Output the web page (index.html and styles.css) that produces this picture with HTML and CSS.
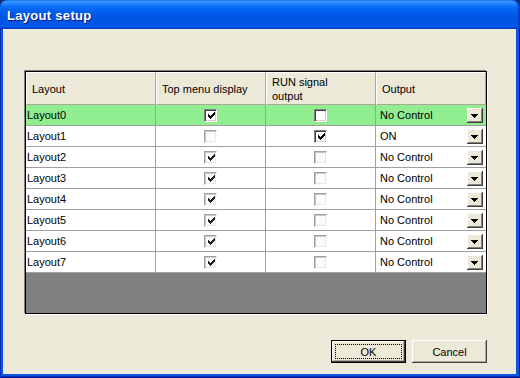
FILE: index.html
```html
<!DOCTYPE html>
<html>
<head>
<meta charset="utf-8">
<link rel="stylesheet" href="styles.css">
</head>
<body>
<div class="window">
  <div class="titlebar"><span class="title">Layout setup</span></div>
  <div class="client">
    <div class="grid">
      <div class="row header">
        <div class="cell">Layout</div>
        <div class="cell">Top menu display</div>
        <div class="cell">RUN signal<br>output</div>
        <div class="cell">Output</div>
      </div>

      <div class="row selected">
        <div class="cell c-name">Layout0</div>
        <div class="cell c-chk"><span class="chk"><svg width="7" height="7" class="tick"><rect x="0" y="2" width="1" height="3"/><rect x="1" y="3" width="1" height="3"/><rect x="2" y="4" width="1" height="3"/><rect x="3" y="3" width="1" height="3"/><rect x="4" y="2" width="1" height="3"/><rect x="5" y="1" width="1" height="3"/><rect x="6" y="0" width="1" height="3"/></svg></span></div>
        <div class="cell c-chk"><span class="chk"></span></div>
        <div class="cell c-out"><span>No Control</span><span class="dd"><svg width="7" height="4"><rect x="0" y="0" width="7" height="1"/><rect x="1" y="1" width="5" height="1"/><rect x="2" y="2" width="3" height="1"/><rect x="3" y="3" width="1" height="1"/></svg></span></div>
      </div>

      <div class="row">
        <div class="cell c-name">Layout1</div>
        <div class="cell c-chk"><span class="chk off"></span></div>
        <div class="cell c-chk"><span class="chk"><svg width="7" height="7" class="tick"><rect x="0" y="2" width="1" height="3"/><rect x="1" y="3" width="1" height="3"/><rect x="2" y="4" width="1" height="3"/><rect x="3" y="3" width="1" height="3"/><rect x="4" y="2" width="1" height="3"/><rect x="5" y="1" width="1" height="3"/><rect x="6" y="0" width="1" height="3"/></svg></span></div>
        <div class="cell c-out"><span>ON</span><span class="dd"><svg width="7" height="4"><rect x="0" y="0" width="7" height="1"/><rect x="1" y="1" width="5" height="1"/><rect x="2" y="2" width="3" height="1"/><rect x="3" y="3" width="1" height="1"/></svg></span></div>
      </div>

      <div class="row">
        <div class="cell c-name">Layout2</div>
        <div class="cell c-chk"><span class="chk off"><svg width="7" height="7" class="tick"><rect x="0" y="2" width="1" height="3"/><rect x="1" y="3" width="1" height="3"/><rect x="2" y="4" width="1" height="3"/><rect x="3" y="3" width="1" height="3"/><rect x="4" y="2" width="1" height="3"/><rect x="5" y="1" width="1" height="3"/><rect x="6" y="0" width="1" height="3"/></svg></span></div>
        <div class="cell c-chk"><span class="chk off"></span></div>
        <div class="cell c-out"><span>No Control</span><span class="dd"><svg width="7" height="4"><rect x="0" y="0" width="7" height="1"/><rect x="1" y="1" width="5" height="1"/><rect x="2" y="2" width="3" height="1"/><rect x="3" y="3" width="1" height="1"/></svg></span></div>
      </div>

      <div class="row">
        <div class="cell c-name">Layout3</div>
        <div class="cell c-chk"><span class="chk off"><svg width="7" height="7" class="tick"><rect x="0" y="2" width="1" height="3"/><rect x="1" y="3" width="1" height="3"/><rect x="2" y="4" width="1" height="3"/><rect x="3" y="3" width="1" height="3"/><rect x="4" y="2" width="1" height="3"/><rect x="5" y="1" width="1" height="3"/><rect x="6" y="0" width="1" height="3"/></svg></span></div>
        <div class="cell c-chk"><span class="chk off"></span></div>
        <div class="cell c-out"><span>No Control</span><span class="dd"><svg width="7" height="4"><rect x="0" y="0" width="7" height="1"/><rect x="1" y="1" width="5" height="1"/><rect x="2" y="2" width="3" height="1"/><rect x="3" y="3" width="1" height="1"/></svg></span></div>
      </div>

      <div class="row">
        <div class="cell c-name">Layout4</div>
        <div class="cell c-chk"><span class="chk off"><svg width="7" height="7" class="tick"><rect x="0" y="2" width="1" height="3"/><rect x="1" y="3" width="1" height="3"/><rect x="2" y="4" width="1" height="3"/><rect x="3" y="3" width="1" height="3"/><rect x="4" y="2" width="1" height="3"/><rect x="5" y="1" width="1" height="3"/><rect x="6" y="0" width="1" height="3"/></svg></span></div>
        <div class="cell c-chk"><span class="chk off"></span></div>
        <div class="cell c-out"><span>No Control</span><span class="dd"><svg width="7" height="4"><rect x="0" y="0" width="7" height="1"/><rect x="1" y="1" width="5" height="1"/><rect x="2" y="2" width="3" height="1"/><rect x="3" y="3" width="1" height="1"/></svg></span></div>
      </div>

      <div class="row">
        <div class="cell c-name">Layout5</div>
        <div class="cell c-chk"><span class="chk off"><svg width="7" height="7" class="tick"><rect x="0" y="2" width="1" height="3"/><rect x="1" y="3" width="1" height="3"/><rect x="2" y="4" width="1" height="3"/><rect x="3" y="3" width="1" height="3"/><rect x="4" y="2" width="1" height="3"/><rect x="5" y="1" width="1" height="3"/><rect x="6" y="0" width="1" height="3"/></svg></span></div>
        <div class="cell c-chk"><span class="chk off"></span></div>
        <div class="cell c-out"><span>No Control</span><span class="dd"><svg width="7" height="4"><rect x="0" y="0" width="7" height="1"/><rect x="1" y="1" width="5" height="1"/><rect x="2" y="2" width="3" height="1"/><rect x="3" y="3" width="1" height="1"/></svg></span></div>
      </div>

      <div class="row">
        <div class="cell c-name">Layout6</div>
        <div class="cell c-chk"><span class="chk off"><svg width="7" height="7" class="tick"><rect x="0" y="2" width="1" height="3"/><rect x="1" y="3" width="1" height="3"/><rect x="2" y="4" width="1" height="3"/><rect x="3" y="3" width="1" height="3"/><rect x="4" y="2" width="1" height="3"/><rect x="5" y="1" width="1" height="3"/><rect x="6" y="0" width="1" height="3"/></svg></span></div>
        <div class="cell c-chk"><span class="chk off"></span></div>
        <div class="cell c-out"><span>No Control</span><span class="dd"><svg width="7" height="4"><rect x="0" y="0" width="7" height="1"/><rect x="1" y="1" width="5" height="1"/><rect x="2" y="2" width="3" height="1"/><rect x="3" y="3" width="1" height="1"/></svg></span></div>
      </div>

      <div class="row">
        <div class="cell c-name">Layout7</div>
        <div class="cell c-chk"><span class="chk off"><svg width="7" height="7" class="tick"><rect x="0" y="2" width="1" height="3"/><rect x="1" y="3" width="1" height="3"/><rect x="2" y="4" width="1" height="3"/><rect x="3" y="3" width="1" height="3"/><rect x="4" y="2" width="1" height="3"/><rect x="5" y="1" width="1" height="3"/><rect x="6" y="0" width="1" height="3"/></svg></span></div>
        <div class="cell c-chk"><span class="chk off"></span></div>
        <div class="cell c-out"><span>No Control</span><span class="dd"><svg width="7" height="4"><rect x="0" y="0" width="7" height="1"/><rect x="1" y="1" width="5" height="1"/><rect x="2" y="2" width="3" height="1"/><rect x="3" y="3" width="1" height="1"/></svg></span></div>
      </div>

      <div class="empty"></div>
    </div>

    <div class="buttons">
      <button class="btn default">OK</button>
      <button class="btn">Cancel</button>
    </div>
  </div>
</div>
</body>
</html>
```

FILE: styles.css
```css
html, body {
  margin: 0;
  padding: 0;
}
body {
  background: #1c2c6c;
  font-family: "Liberation Sans", Arial, sans-serif;
  font-size: 11px;
  color: #000;
}
.window {
  width: 520px;
  height: 378px;
  display: flex;
  flex-direction: column;
  background: #0a55e0;
  border-radius: 7px 7px 0 0;
  overflow: hidden;
  box-shadow: inset 1px 0 #0027b8, inset -1px 0 #001a94, inset 0 -1px #00138c, inset 0 -2px #0030c4;
}
.titlebar {
  flex: none;
  height: 29px;
  box-sizing: border-box;
  padding: 1px 0 0 7px;
  display: flex;
  align-items: center;
  border-radius: 7px 7px 0 0;
  background: linear-gradient(180deg,
    #0a5fee 0px, #3d95ff 1px, #2b8cff 3px, #0e73fb 6px,
    #0263f0 10px, #0058e6 15px, #0055e2 20px, #0056e7 24px,
    #005cf1 26px, #0050da 27px, #003bbf 29px);
  box-shadow: inset -2px 0 #0040c8;
}
.title {
  color: #fff;
  font-weight: bold;
  font-size: 13px;
  letter-spacing: 0.3px;
  text-shadow: 1px 1px 0 #0a1883;
}
.client {
  flex: 1;
  margin: 0 4px 4px 3px;
  background: #ece9d8;
  padding: 42px 29px 0 22px;
  display: flex;
  flex-direction: column;
}
.grid {
  width: 462px;
  height: 243px;
  box-sizing: border-box;
  border: 1px solid #000;
  box-shadow: -1px -1px 0 #808080, 1px 1px 0 #ffffff;
  background: #808080;
  display: flex;
  flex-direction: column;
}
.row {
  flex: none;
  display: grid;
  grid-template-columns: 130px 110px 110px 110px;
  height: 21px;
  background: #fff;
}
.row.selected {
  background: #90ee90;
}
.cell {
  box-sizing: border-box;
  border-right: 1px solid #a0a0a0;
  border-bottom: 1px solid #a0a0a0;
  display: flex;
  align-items: center;
  white-space: nowrap;
  overflow: hidden;
}
.cell:last-child {
  border-right: none;
}
.row.header {
  height: 33px;
  background: #ece9d8;
}
.header .cell {
  border-left: 1px solid #fff;
  border-top: 1px solid #fff;
  border-right: 1px solid #aca899;
  border-bottom: 1px solid #aca899;
  padding-left: 5px;
  line-height: 14px;
}
.header .cell:last-child {
  border-right: 1px solid #aca899;
}
.c-name {
  padding-left: 1px;
}
.c-chk {
  justify-content: center;
}
.c-out {
  justify-content: space-between;
  padding: 0 3px 0 4px;
}
.chk {
  width: 13px;
  height: 13px;
  box-sizing: border-box;
  background: #fff;
  border-top: 1px solid #808080;
  border-left: 1px solid #808080;
  border-right: 1px solid #ffffff;
  border-bottom: 1px solid #ffffff;
  box-shadow: inset 1px 1px 0 #404040, inset -1px -1px 0 #d4d0c8;
  display: flex;
  align-items: center;
  justify-content: center;
  padding: 1px 0 0 1px;
}
.chk.off {
  border-top-color: #a0a0a0;
  border-left-color: #a0a0a0;
  box-shadow: inset 1px 1px 0 #c8c8c8, inset -1px -1px 0 #ece9d8;
  background: #fbfbf9;
}
.tick {
  display: block;
  fill: #000;
  shape-rendering: crispEdges;
}
.chk.off .tick {
  fill: #202020;
}
.dd {
  width: 16px;
  height: 15px;
  box-sizing: border-box;
  background: #ece9d8;
  box-shadow: inset -1px -1px 0 #404040, inset 1px 1px 0 #fff, inset -2px -2px 0 #808080;
  display: flex;
  align-items: center;
  justify-content: center;
  padding: 1px 1px 0 0;
}
.dd svg {
  display: block;
  fill: #000;
  shape-rendering: crispEdges;
}
.empty {
  flex: 1;
}
.buttons {
  display: flex;
  justify-content: flex-end;
  gap: 6px;
  margin-top: 26px;
}
.btn {
  position: relative;
  width: 75px;
  height: 23px;
  box-sizing: border-box;
  padding: 0;
  border: none;
  background: #ece9d8;
  box-shadow: inset -1px -1px 0 #404040, inset 1px 1px 0 #fff, inset -2px -2px 0 #aca899;
  font-family: "Liberation Sans", Arial, sans-serif;
  font-size: 11px;
  color: #000;
}
.btn.default {
  border: 1px solid #000;
}
.btn.default::after {
  content: "";
  position: absolute;
  left: 3px;
  top: 3px;
  right: 3px;
  bottom: 3px;
  border: 1px dotted #000;
}
```
